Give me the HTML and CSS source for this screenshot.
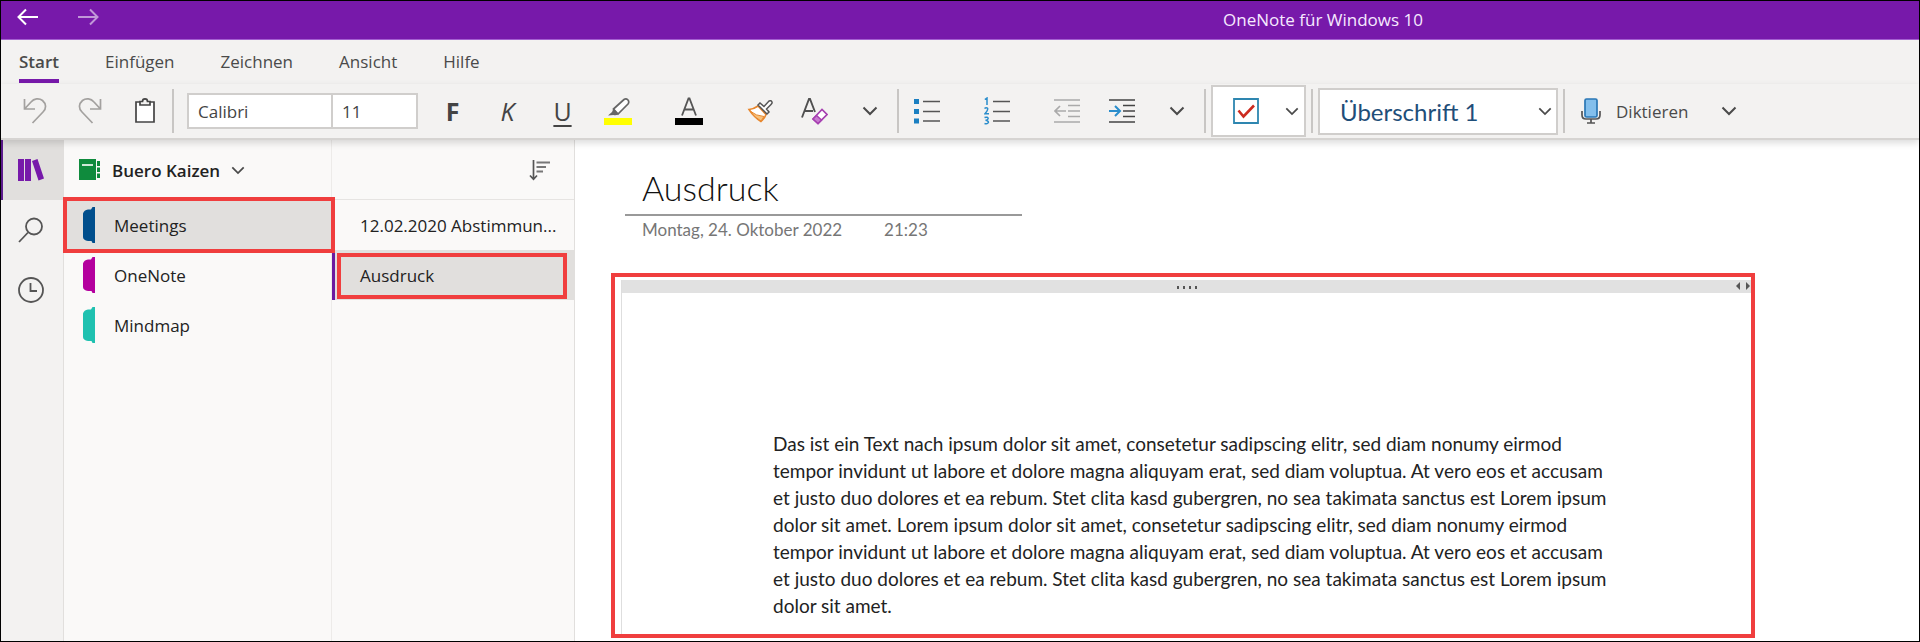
FILE: index.html
```html
<!DOCTYPE html>
<html lang="de">
<head>
<meta charset="utf-8">
<title>OneNote für Windows 10</title>
<link rel="stylesheet" href="styles.css">
</head>
<body>
<svg class="defs" aria-hidden="true">
  <symbol id="chevron" viewBox="0 0 16 10"><path d="M1.500 1.500 8 8l6.500-6.500" fill="none" stroke="currentColor" stroke-width="2"/></symbol>
  <symbol id="section" viewBox="0 0 12 36"><path d="M12 0v36H9.500l-1-2H5Q0 33 0 30V6.500Q1 3 5 2.500H8L9.500 0Z" fill="currentColor"/></symbol>
</svg>
<div class="app">
  <header class="titlebar">
    <nav class="history">
      <button class="nav-btn" aria-label="Zurück"><svg width="22" height="18" viewBox="0 0 22 18"><path d="M21 9H2M9 1.500 1.500 9 9 16.500" /></svg></button>
      <button class="nav-btn nav-dim" aria-label="Vorwärts"><svg width="22" height="18" viewBox="0 0 22 18"><path d="M1 9h19M13 1.500 20.500 9 13 16.500" /></svg></button>
    </nav>
    <span class="app-title">OneNote für Windows 10</span>
  </header>

  <nav class="tabs">
    <button class="tab tab-active">Start</button>
    <button class="tab">Einfügen</button>
    <button class="tab">Zeichnen</button>
    <button class="tab">Ansicht</button>
    <button class="tab">Hilfe</button>
  </nav>

  <div class="toolbar">
    <div class="group group-edit">
      <button class="tool" aria-label="Rückgängig"><svg width="24" height="28" viewBox="0 0 24 28" fill="none" stroke="#a3a19f" stroke-width="1.700"><path d="M1.500 2v10H12M2 11.500 8 5C11 1.500 16 .8 19.500 3.500 23.500 7 23.500 11.500 20 15L9.500 26"/></svg></button>
      <button class="tool" aria-label="Wiederholen"><svg width="24" height="28" viewBox="0 0 24 28" fill="none" stroke="#a3a19f" stroke-width="1.700"><path d="M22.500 2v10H12M22 11.500 16 5C13 1.500 8 .8 4.500 3.500 .5 7 .5 11.500 4 15L14.500 26"/></svg></button>
      <button class="tool" aria-label="Einfügen"><svg width="20" height="28" viewBox="0 0 20 28" fill="none" stroke="#444" stroke-width="1.700"><path d="M5 5H1v20h18V5h-4" fill="#fff"/><path d="M5 8V4.500h2.500C7.500 1 12.500 1 12.500 4.500H15V8Z" fill="#f3f2f1"/></svg></button>
    </div>
    <span class="sep"></span>
    <div class="font-box">
      <input class="font-name" type="text" value="Calibri" aria-label="Schriftart">
      <input class="font-size" type="text" value="11" aria-label="Schriftgrad">
    </div>
    <div class="group">
      <button class="tool letter bold" aria-label="Fett">F</button>
      <button class="tool letter italic" aria-label="Kursiv">K</button>
      <button class="tool letter underline" aria-label="Unterstrichen">U</button>
      <button class="tool" aria-label="Textmarker"><svg width="28" height="28" viewBox="0 0 28 28"><path d="M9.500 12 20 2.500Q22 1 24 3 25.500 5 24 7L14 17Z" fill="#fff" stroke="#666" stroke-width="1.700"/><path d="M9.500 11.500 14.500 17Q12 19 9.500 18L4 18.500 8 15Z" fill="#666"/><path d="M0 21h28v7H0z" fill="#ff0"/></svg></button>
      <button class="tool tool-wide" aria-label="Schriftfarbe"><svg width="28" height="28" viewBox="0 0 28 28"><path d="M7 18.500 13.500 1.500h1L21 18.500M9.500 12.500h9" fill="none" stroke="#555" stroke-width="1.800"/><path d="M0 21h28v7H0z" fill="#000"/></svg></button>
      <button class="tool" aria-label="Format übertragen"><svg width="26" height="24" viewBox="0 0 26 24"><path d="M2 10.500Q7 10 11 7L19 15.500Q18 19 14 22.500 7 18 2 10.500Z" fill="#fff" stroke="#e8862c" stroke-width="1.600"/><path d="M3 12Q9 17 17 17.500L14 22Q8 19 3 12Z" fill="#f7c27d" stroke="#e8862c"/><path d="M11 6 13 4l4 3.500L22 2q2-1 3 1 .5 1-1 2.500L19.500 10l2.500 3-2 2Z" fill="#fff" stroke="#555" stroke-width="1.500"/></svg></button>
      <button class="tool" aria-label="Formatierung löschen"><svg width="27" height="28" viewBox="0 0 27 28"><path d="M1 20.500 8 2h1L14 15M4 14h8" fill="none" stroke="#505050" stroke-width="1.900"/><path d="m12 22 9-9.500 5 5L17 26.500Z" fill="#fff" stroke="#a63fb0" stroke-width="1.700"/><path d="m12 22 3.500-3.500 5 4.500-3.500 3.500Z" fill="#c77bd0" stroke="#a63fb0" stroke-width="1.500"/></svg></button>
      <button class="tool" aria-label="Weitere Schriftoptionen"><svg class="chev"><use href="#chevron"/></svg></button>
    </div>
    <span class="sep"></span>
    <div class="group">
      <button class="tool" aria-label="Aufzählung"><svg width="26" height="26" viewBox="0 0 26 26"><path d="M0 1h5v5H0zM0 11h5v5H0zM0 20.500h5v5H0z" fill="#1a7fc1"/><path d="M9 3.500h17M9 13.500h17M9 23h17" stroke="#555" stroke-width="1.700"/></svg></button>
      <button class="tool tool-numbers" aria-label="Nummerierung"><svg width="26" height="28" viewBox="0 0 26 28"><g fill="none" stroke="#2a8dcc" stroke-width="1.500"><path d="M.8 2.500 3 1v7M.5 11.500Q2 10.200 3.500 11.200 4.500 12.800 1 16.800H5M.5 20.500Q4 19.500 4.200 21.500 4 23 1.500 23.200 4.500 23.500 4.400 25.500 3.500 27.500 .5 26.500"/></g><path d="M9 4.500h17M9 14.500h17M9 24h17" stroke="#555" stroke-width="1.700"/></svg></button>
      <button class="tool" aria-label="Einzug verkleinern"><svg width="26" height="26" viewBox="0 0 26 26" fill="none" stroke="#aaa" stroke-width="1.700"><path d="M0 2h26M14 7.500h12M14 13h12M14 18.500h12M0 24h26M12 13H1.500M6 8 1 13l5 5"/></svg></button>
      <button class="tool" aria-label="Einzug vergrößern"><svg width="26" height="26" viewBox="0 0 26 26" fill="none" stroke="#444" stroke-width="1.700"><path d="M0 2h26M14 7.500h12M14 13h12M14 18.500h12M0 24h26"/><path d="M0 13h10.500M6 8l5 5-5 5" stroke="#2a8dcc" stroke-width="2"/></svg></button>
      <button class="tool" aria-label="Weitere Absatzoptionen"><svg class="chev"><use href="#chevron"/></svg></button>
    </div>
    <span class="sep"></span>
    <button class="todo" aria-label="Aufgabenkategorie">
      <svg width="26" height="26" viewBox="0 0 26 26"><path d="M1 1h24v24H1z" fill="#fff" stroke="#2e86b0" stroke-width="1.800"/><path d="m5.500 12.500 5 6L21 7.500" fill="none" stroke="#cc2b1f" stroke-width="2.600"/></svg>
      <svg class="chev chev-small"><use href="#chevron"/></svg>
    </button>
    <span class="sep"></span>
    <div class="style-box">
      <select class="style-select" aria-label="Formatvorlage"><option>Überschrift 1</option></select>
      <svg class="chev chev-small style-chev"><use href="#chevron"/></svg>
    </div>
    <span class="sep"></span>
    <button class="dictate">
      <svg width="20" height="26" viewBox="0 0 20 26"><path d="M1 13v4q0 4 4 4h10q4 0 4-4v-4M10 21v4M6 25h8" fill="none" stroke="#555" stroke-width="1.700"/><rect x="4" y="1" width="12" height="18" rx="1.500" fill="#83bfec" stroke="#2a77b5" stroke-width="1.700"/></svg>
      <span>Diktieren</span>
    </button>
    <button class="tool" aria-label="Diktieroptionen"><svg class="chev"><use href="#chevron"/></svg></button>
  </div>

  <div class="workspace">
    <nav class="rail">
      <button class="rail-btn rail-active" aria-label="Notizbücher"><svg width="26" height="24" viewBox="0 0 26 24" fill="#7719aa"><path d="M0 1h6v22H0zM7 1h6v22H7zM14 3 19.500 1l6.500 19.500-5.500 2Z"/></svg></button>
      <button class="rail-btn" aria-label="Suchen"><svg width="26" height="26" viewBox="0 0 26 26" fill="none" stroke="#555" stroke-width="1.800"><circle cx="16" cy="9.500" r="8"/><path d="M10 15.500 1 25"/></svg></button>
      <button class="rail-btn" aria-label="Zuletzt verwendet"><svg width="26" height="26" viewBox="0 0 26 26" fill="none" stroke="#555" stroke-width="1.800"><circle cx="13" cy="13" r="12"/><path d="M12.500 6v8H19"/></svg></button>
    </nav>

    <section class="sections">
      <button class="notebook">
        <svg width="22" height="22" viewBox="0 0 22 22"><path d="M0 0h17v21H0zM18 2h3v5h-3zM18 8.500h3v4.500h-3zM18 14.500h3V19h-3z" fill="#0f8b3d"/><path d="M3 6h11" stroke="#fff" stroke-width="1.600"/></svg>
        <span>Buero Kaizen</span>
        <svg class="chev chev-small"><use href="#chevron"/></svg>
      </button>
      <button class="row section-row row-selected marked"><svg class="section-icon blue"><use href="#section"/></svg><span>Meetings</span></button>
      <button class="row section-row"><svg class="section-icon magenta"><use href="#section"/></svg><span>OneNote</span></button>
      <button class="row section-row"><svg class="section-icon teal"><use href="#section"/></svg><span>Mindmap</span></button>
    </section>

    <section class="pages">
      <div class="pages-head">
        <button class="sort" aria-label="Sortieren"><svg width="22" height="22" viewBox="0 0 22 22" fill="none" stroke="#555" stroke-width="1.700"><path d="M4.500 1v19M1 16.500l3.500 3.800L8 16.500"/><path d="M7.500 3.500H21M7.500 8H17M7.500 12.500H14" stroke="#777" stroke-width="1.800"/></svg></button>
      </div>
      <button class="row page-row"><span>12.02.2020 Abstimmun...</span></button>
      <button class="row page-row row-selected page-current marked"><span>Ausdruck</span></button>
    </section>

    <main class="canvas">
      <div class="page-head">
        <h1 class="page-title">Ausdruck</h1>
        <p class="page-date"><span>Montag, 24. Oktober 2022</span><span>21:23</span></p>
      </div>
      <div class="note-frame">
        <div class="note">
          <div class="note-bar">
            <svg width="22" height="4" viewBox="0 0 22 4" fill="#555"><path d="M1 1h2v3H1zM7 1h2v3H7zM13 1h2v3h-2zM19 1h2v3h-2z"/></svg>
            <svg class="note-resize" width="14" height="8" viewBox="0 0 14 8" fill="#555"><path d="M4 0v8L0 4ZM10 0v8l4-4Z"/></svg>
          </div>
          <p class="note-text">Das ist ein Text nach ipsum dolor sit amet, consetetur sadipscing elitr, sed diam nonumy eirmod<br>tempor invidunt ut labore et dolore magna aliquyam erat, sed diam voluptua. At vero eos et accusam<br>et justo duo dolores et ea rebum. Stet clita kasd gubergren, no sea takimata sanctus est Lorem ipsum<br>dolor sit amet. Lorem ipsum dolor sit amet, consetetur sadipscing elitr, sed diam nonumy eirmod<br>tempor invidunt ut labore et dolore magna aliquyam erat, sed diam voluptua. At vero eos et accusam<br>et justo duo dolores et ea rebum. Stet clita kasd gubergren, no sea takimata sanctus est Lorem ipsum<br>dolor sit amet.</p>
        </div>
      </div>
    </main>
  </div>
</div>
</body>
</html>
```

FILE: styles.css
```css
* { box-sizing: border-box; }

body {
  margin: 0;
  font-family: "Open Sans", "Noto Sans", sans-serif;
  font-size: 17px;
  color: #222;
}

button {
  padding: 0;
  border: 0;
  background: none;
  font: inherit;
  color: inherit;
}

svg { display: block; flex: none; }
.defs { position: absolute; width: 0; height: 0; }

.app {
  display: flex;
  flex-direction: column;
  min-height: 100vh;
  border: 1px solid #000;
  background: #fff;
}

/* Title bar */
.titlebar {
  display: grid;
  grid-template-columns: 744px 1fr 18px;
  align-items: center;
  height: 39px;
  border-bottom: 1px solid #a45fd0;
  background: #7719aa;
  color: #f6e9ff;
}
.history { display: flex; gap: 38px; padding: 0 0 6px 16px; }
.nav-btn svg { fill: none; stroke: #fff; stroke-width: 2; }
.nav-dim { opacity: 0.55; }
.app-title { padding-bottom: 2px; text-align: center; }

/* Ribbon tabs */
.tabs {
  display: flex;
  gap: 46px;
  height: 44px;
  padding: 4px 18px 0;
  background: #f3f2f1;
  color: #4a4a4a;
}
.tab { height: 39px; border-bottom: 4px solid transparent; }
.tab-active { border-color: #7719aa; font-weight: 600; }

/* Ribbon tools */
.toolbar {
  display: flex;
  align-items: center;
  position: relative;
  height: 56px;
  padding-left: 6px;
  border-bottom: 2px solid #d6d4d2;
  background: #f3f2f1;
  color: #4a4a4a;
  box-shadow: 0 3px 7px rgba(0, 0, 0, 0.14);
}
.group { display: flex; }
.tool {
  display: flex;
  align-items: center;
  justify-content: center;
  width: 55px;
  height: 40px;
}
.tool-wide { width: 87px; }
.tool-numbers { width: 85px; }
.sep { width: 2px; height: 44px; background: #c8c6c4; }
.chev { width: 16px; height: 10px; color: #4a4a4a; }
.chev-small { width: 14px; height: 9px; }
.letter { font-size: 25px; line-height: 36px; color: #444; }
.bold { font-weight: 700; }
.italic { font-style: italic; }
.underline { text-decoration: underline; text-decoration-thickness: 2px; text-underline-offset: 4px; }

.font-box {
  display: flex;
  width: 231px;
  height: 36px;
  margin: 0 7px 0 13px;
  border: 2px solid #d0cecc;
  background: #fff;
}
.font-name,
.font-size {
  min-width: 0;
  padding: 0 0 0 9px;
  border: 0;
  background: none;
  font: inherit;
  color: #444;
}
.font-name { width: 142px; }
.font-size { flex: 1; border-left: 2px solid #d0cecc; }

.todo {
  display: flex;
  align-items: center;
  justify-content: space-between;
  width: 95px;
  height: 52px;
  margin: 0 5px;
  padding: 0 5px 0 20px;
  border: 2px solid #d0cecc;
  background: #fff;
}
.style-box {
  position: relative;
  width: 240px;
  height: 47px;
  margin: 0 5px;
}
.style-select {
  appearance: none;
  width: 100%;
  height: 100%;
  padding: 0 32px 0 20px;
  border: 2px solid #d0cecc;
  border-radius: 0;
  background: #fff;
  font-family: Lato, "Open Sans", sans-serif;
  font-size: 24px;
  color: #1f4e79;
}
.style-chev { position: absolute; right: 6px; top: 19px; pointer-events: none; }
.dictate { display: flex; align-items: center; gap: 15px; margin: 0 13px 0 16px; }

/* Workspace columns */
.workspace { display: flex; flex: 1; }
.rail {
  display: flex;
  flex-direction: column;
  width: 63px;
  border-right: 1px solid #e1dfdd;
  background: #f3f2f1;
}
.rail-btn {
  display: flex;
  align-items: center;
  justify-content: center;
  height: 60px;
  padding-right: 2px;
}
.rail-active {
  padding-right: 4px;
  border-left: 2px solid #5c1a8c;
  background: #e1dfdd;
}

.sections {
  width: 268px;
  border-right: 1px solid #edebe9;
  background: #faf9f8;
}
.notebook {
  display: flex;
  align-items: center;
  gap: 11px;
  height: 60px;
  padding-left: 15px;
  font-weight: 600;
}
.row {
  display: flex;
  align-items: center;
  position: relative;
  width: 100%;
  height: 50px;
}
.row-selected { background: #e1dfdd; }
.section-row { gap: 19px; padding-left: 19px; }
.section-icon { width: 12px; height: 36px; }
.blue { color: #004e8c; }
.magenta { color: #b4009e; }
.teal { color: #1fc1b0; }
.marked::after {
  content: "";
  position: absolute;
  border: 4px solid #f03e3e;
}
.section-row.marked::after { inset: -3px -4px -3px -1px; z-index: 1; }

.pages {
  width: 243px;
  border-right: 1px solid #e1dfdd;
  background: #faf9f8;
}
.pages-head {
  display: flex;
  align-items: center;
  justify-content: flex-end;
  height: 60px;
  padding-right: 23px;
  border-bottom: 1px solid #e6e4e2;
}
.page-row { padding-left: 28px; white-space: nowrap; }
.page-current { border-left: 3px solid #6b1aa0; padding-left: 25px; }
.page-row.marked::after { inset: 3px 7px 1px 2px; }

/* Page canvas */
.canvas {
  display: flex;
  flex: 1;
  flex-direction: column;
  padding: 28px 164px 3px 36px;
  background: #fff;
}
.page-head { padding-left: 14px; font-family: Lato, "Open Sans", sans-serif; }
.page-title {
  width: 397px;
  margin: 0;
  padding: 0 0 6px 17px;
  border-bottom: 2px solid #999;
  font-size: 34px;
  font-weight: 300;
  line-height: 40px;
  color: #111;
}
.page-date {
  display: flex;
  gap: 42px;
  margin: 0;
  padding: 2px 0 0 17px;
  font-size: 17px;
  line-height: 24px;
  color: #767676;
}
.note-frame {
  flex: 1;
  margin-top: 31px;
  padding: 3px 0 0 6px;
  border: 4px solid #f03e3e;
}
.note { height: 100%; border-left: 1px solid #dedede; }
.note-bar {
  display: flex;
  align-items: center;
  justify-content: center;
  position: relative;
  height: 13px;
  background: #e1e1e1;
}
.note-resize { position: absolute; right: 1px; top: 2px; }
.note-text {
  margin: 137px 0 0;
  padding-left: 151px;
  font-family: Lato, "Open Sans", sans-serif;
  font-size: 19px;
  line-height: 27px;
  color: #222;
  white-space: nowrap;
}
```
